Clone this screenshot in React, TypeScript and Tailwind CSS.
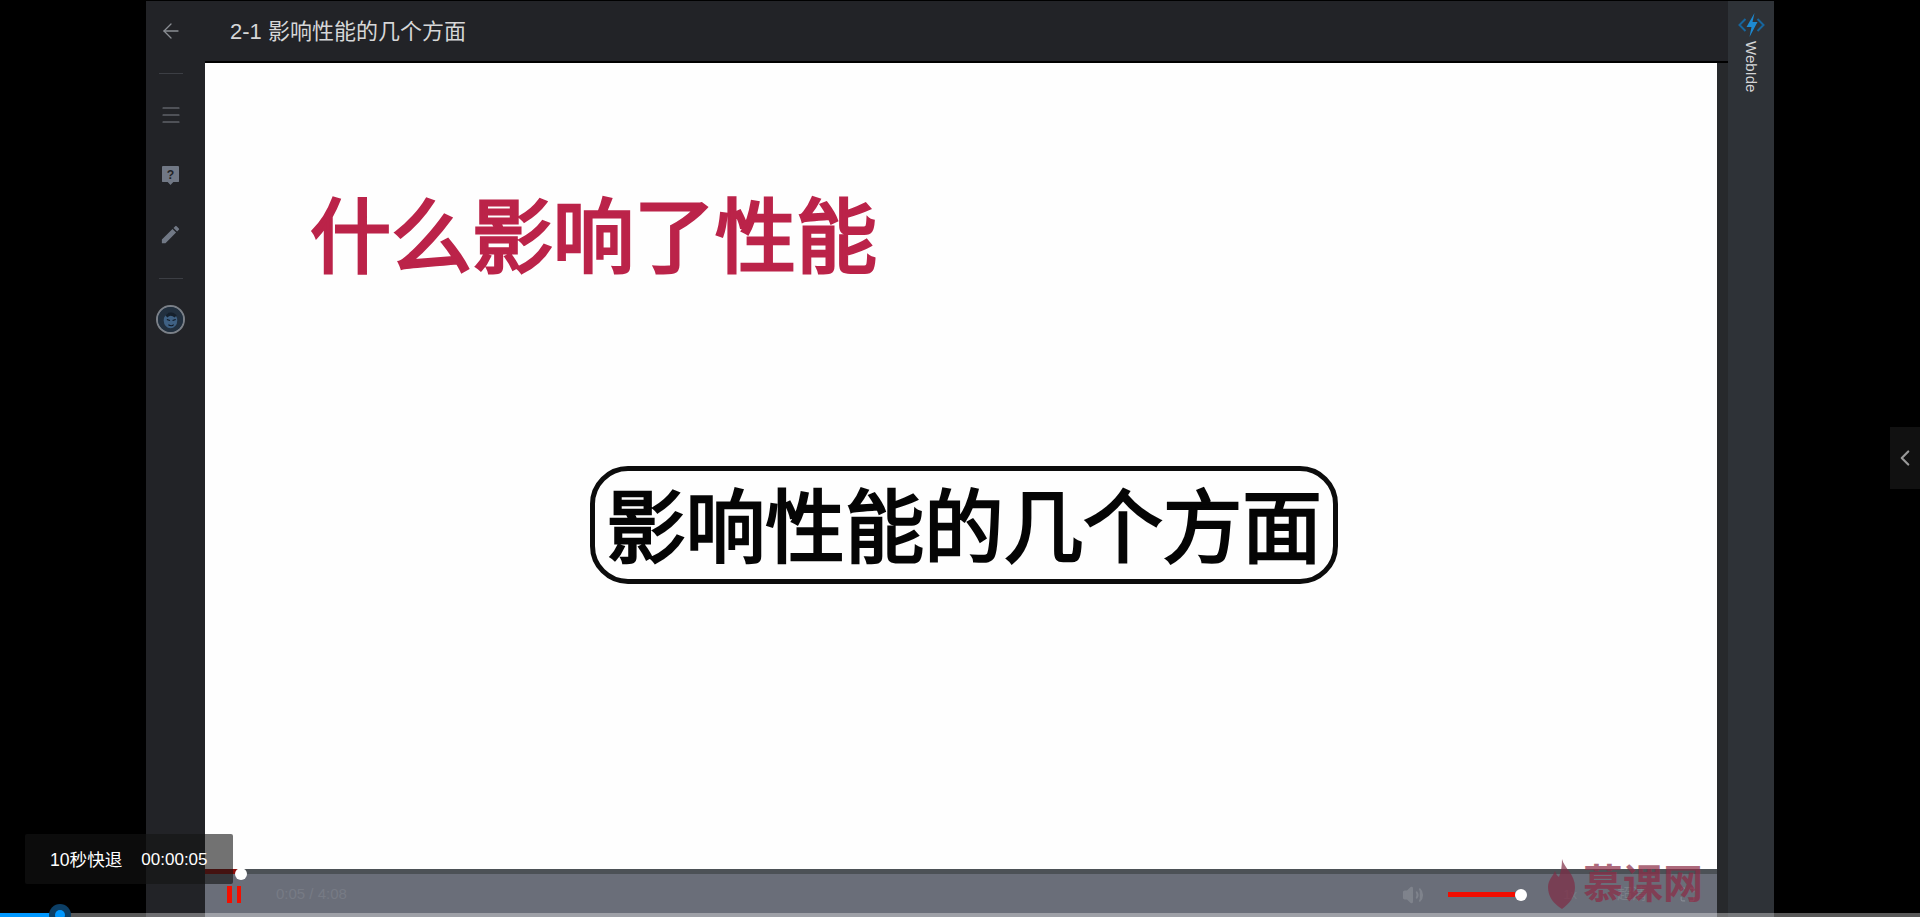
import { ArrowLeft, ChevronLeft, Maximize, Menu, Volume2 } from "lucide-react";

const CJK = "font-['Liberation_Sans','Noto_Sans_CJK_SC',sans-serif]";

function Sidebar() {
  return (
    <aside className="flex w-[59px] shrink-0 flex-col items-center bg-[#222327] pr-[10px] pt-[18px]">
      <ArrowLeft className="h-[24px] w-[24px] text-[#8b8e94]" strokeWidth={1.3} />
      <div className="mt-[30px] h-px w-[24px] bg-[#3c3e44]" />
      <Menu className="mt-[29px] h-[24px] w-[24px] text-[#7d8087]" strokeWidth={1.1} />
      <svg viewBox="0 0 18 20" className="mt-[39px] h-[19px] w-[17px]">
        <path d="M1 0h16a1 1 0 0 1 1 1v15a1 1 0 0 1-1 1h-5l-3 3-3-3H1a1 1 0 0 1-1-1V1a1 1 0 0 1 1-1z" fill="#717885" />
        <text x="9" y="14" textAnchor="middle" fontSize="13" fontWeight="700" fill="#222327" fontFamily="Liberation Sans">?</text>
      </svg>
      <svg viewBox="0 0 24 24" className="mt-[38px] h-[23px] w-[23px]" fill="#717885">
        <path d="M3 17.25V21h3.75L17.81 9.94l-3.75-3.75L3 17.25zM20.71 7.04a1 1 0 0 0 0-1.41l-2.34-2.34a1 1 0 0 0-1.41 0l-1.83 1.83 3.75 3.75 1.83-1.83z" />
      </svg>
      <div className="mt-[32px] h-px w-[24px] bg-[#3c3e44]" />
      <div className="mt-[26px] flex h-[29px] w-[29px] items-center justify-center rounded-full border-2 border-[#7b8088] bg-[#1f3145]">
        <svg viewBox="0 0 24 24" className="h-[25px] w-[25px]">
          <circle cx="12" cy="12" r="12" fill="#22303f" />
          <ellipse cx="12" cy="13" rx="6.5" ry="7.5" fill="#3f6184" />
          <path d="M7 8q5-6 11 0l-2 2q-4-3-7 0z" fill="#15202c" />
          <path d="M8.5 12l3 1M14 13l3-1M10 17q3 2 5 0" stroke="#0f1722" strokeWidth="1.1" fill="none" />
        </svg>
      </div>
    </aside>
  );
}

function Slide() {
  return (
    <div className="flex min-h-0 flex-1 flex-col items-center bg-[#fefefe]">
      <div className="w-full pl-[105px] pt-[115px]">
        <h2 className="text-[81px] leading-[120px] font-normal text-[#bb2349] [-webkit-text-stroke:3px_#bb2349]">什么影响了性能</h2>
      </div>
      <div className="ml-[6px] mt-[168px] flex h-[118px] w-[748px] items-center justify-center rounded-[38px] border-[5px] border-[#0c0c0c] pt-[7px]">
        <span className="whitespace-nowrap text-[79.5px] leading-none font-normal text-[#050505] [-webkit-text-stroke:2.5px_#050505]">影响性能的几个方面</span>
      </div>
    </div>
  );
}

function Controls() {
  return (
    <div className="relative h-[48px] shrink-0 border-t-[5px] border-[#4c5156] bg-[#6a6e79]">
      <div className="absolute -top-[5px] left-0 h-[5px] w-[33px] bg-[#8c0f0c]" />
      <div className="absolute -top-[6px] left-[30px] h-[12px] w-[12px] rounded-full bg-white" />
      <div className="flex h-full items-center pb-[2px] pl-[22px] pr-[21px]">
        <div className="flex gap-[5px]">
          <div className="h-[17px] w-[4.5px] bg-[#f30f00]" />
          <div className="h-[17px] w-[4.5px] bg-[#f30f00]" />
        </div>
        <span className="ml-[35px] text-[15px] text-[#777b85]">0:05 / 4:08</span>
        <Volume2 className="ml-auto h-[22px] w-[22px] fill-[#7f838c] text-[#7f838c]" />
        <div className="ml-[24px] h-[5px] w-[67px] bg-[#f20d00]" />
        <div className="h-[12px] w-[12px] rounded-full bg-white" />
        <span className="ml-[36px] text-[13px] text-[#777b85]">1x</span>
        <span className="ml-[40px] text-[15px] text-[#7b7f88]">超清</span>
        <Maximize className="ml-[32px] h-[17px] w-[17px] text-[#878b94]" strokeWidth={1.5} />
      </div>
    </div>
  );
}

export default function App() {
  return (
    <div className={`relative flex h-[917px] overflow-hidden bg-black pl-[146px] ${CJK}`}>
      <main className="flex w-[1628px] flex-col pt-px">
        <div className="flex min-h-0 flex-1">
          <Sidebar />
          <div className="flex min-w-0 flex-1 flex-col">
            <header className="flex h-[60px] shrink-0 items-center bg-[#222327] pl-[25px]">
              <span className="text-[22px] text-[#d6d7d8]">2-1 影响性能的几个方面</span>
            </header>
            <div className="flex min-h-0 flex-1 border-t-2 border-black">
              <div className="flex w-[1512px] shrink-0 flex-col">
                <Slide />
                <Controls />
              </div>
              <div className="flex-1 bg-[#27292c]" />
            </div>
          </div>
          <aside className="flex w-[46px] shrink-0 flex-col items-center bg-[#2e3237] pt-[12px]">
            <svg viewBox="0 0 28 24" className="h-[24px] w-[29px]">
              <path d="M8 6l-6 6 6 6M20 6l6 6-6 6" fill="none" stroke="#17659c" strokeWidth="2" />
              <path d="M17 0L9 14h5l-2 10 8-15h-5z" fill="#1d8ad2" />
            </svg>
            <span className="mt-[4px] text-[15px] leading-none text-[#d5d6d7] [writing-mode:vertical-rl]">WebIde</span>
          </aside>
        </div>
      </main>

      {/* seek preview */}
      <div className="absolute left-[25px] top-[834px] flex h-[50px] w-[208px] items-center rounded-[2px] bg-[rgba(20,20,20,0.6)] pl-[25px] pt-[2px] text-[17px] text-white">
        <span className="text-[17.6px]">10秒快退</span>
        <span className="ml-[19px]">00:00:05</span>
      </div>

      {/* page progress */}
      <div className="absolute bottom-0 left-0 h-[4px] w-full bg-white/35">
        <div className="h-full w-[55px] bg-[#0098ff]" />
      </div>
      <div className="absolute left-[55px] top-[910px] h-[10px] w-[10px] rounded-full bg-[#0098ff] ring-[6px] ring-[#0c3f66]" />

      {/* watermark */}
      <div className="pointer-events-none absolute left-[1548px] top-[859px] flex items-center gap-[8px] text-[#8c2b45] opacity-70">
        <svg viewBox="0 0 27 50" className="h-[50px] w-[27px]">
          <path d="M14 0c2 9 13 15 13 28 0 10-6 17-13 22C6 45 0 38 0 28c0-7 5-11 7-16 1 3 2 5 4 6 2-5 3-11 3-18z" fill="#7f2c45" />
        </svg>
        <span className="text-[40px] leading-none font-bold">慕课网</span>
      </div>

      {/* side toggle */}
      <div className="absolute right-0 top-[427px] flex h-[62px] w-[30px] items-center justify-center bg-[#111]">
        <ChevronLeft className="h-[26px] w-[26px] text-[#999]" strokeWidth={2} />
      </div>
    </div>
  );
}
